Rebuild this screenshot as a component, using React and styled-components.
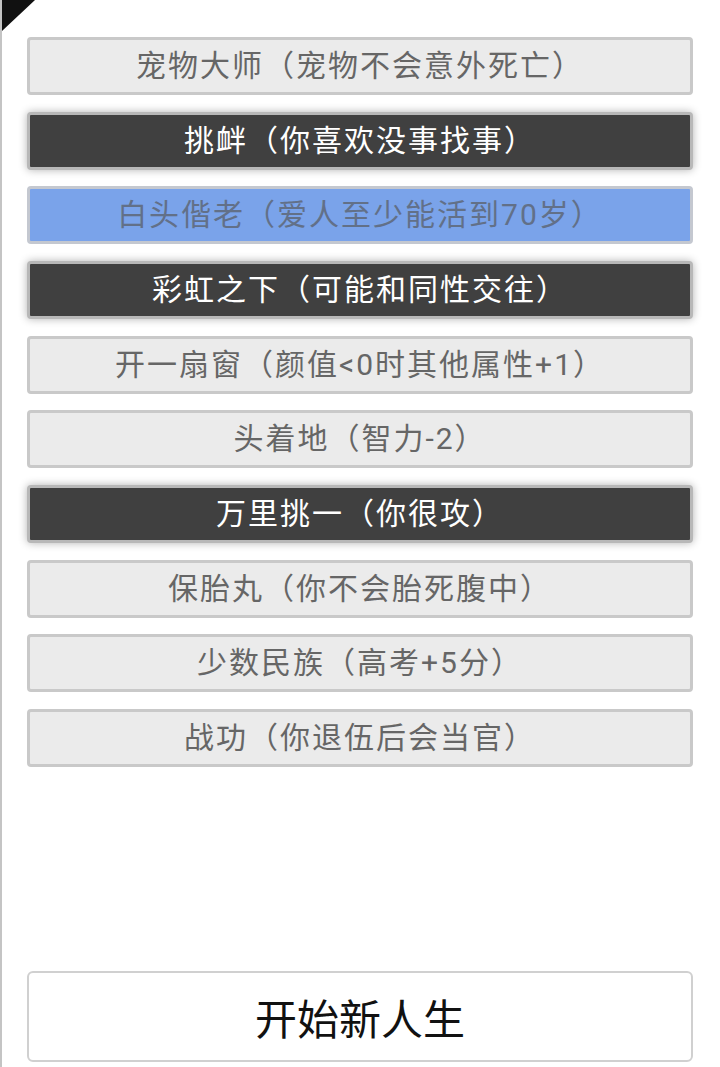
import React from "react";
import styled, { createGlobalStyle, css } from "styled-components";

const Global = createGlobalStyle`
  html, body { margin: 0; padding: 0; background: #fff; }
  body {
    font-family: Roboto, "Noto Sans CJK SC", "Noto Sans", sans-serif;
  }
  * { box-sizing: border-box; }
`;

const Page = styled.div`
  position: relative;
  height: 1067px;
  border-left: 2px solid #c4c4c4;
  display: flex;
  flex-direction: column;
  padding: 37px 27px 5px 25px;
  overflow: hidden;
`;

const Corner = styled.div`
  position: absolute;
  left: -2px;
  top: 0;
  width: 35px;
  height: 33px;
  background: #111;
  clip-path: polygon(0 0, 100% 0, 0 100%);
`;

const List = styled.div`
  display: flex;
  flex-direction: column;
  gap: 16.67px;
`;

const variants = {
  normal: css`
    background: #ebebeb;
    border-color: #c9c9c9;
    color: #666;
  `,
  dark: css`
    background: #404040;
    border-color: #b8b8b8;
    color: #fff;
    box-shadow: 0 0 9px rgba(0, 0, 0, 0.3);
  `,
  selected: css`
    background: #7aa3ea;
    border-color: #c4c8d0;
    color: #627088;
  `,
};

const Talent = styled.div`
  height: 58px;
  border: 3px solid;
  border-radius: 4px;
  display: flex;
  align-items: center;
  justify-content: center;
  font-size: 30px;
  letter-spacing: 2px;
  line-height: 1;
  white-space: nowrap;
  ${(p) => variants[p.$variant]}
`;

const StartButton = styled.div`
  margin-top: auto;
  height: 91px;
  border: 2px solid #d0d0d0;
  border-radius: 6px;
  background: #fff;
  color: #111;
  font-size: 42px;
  display: flex;
  align-items: center;
  justify-content: center;
`;

const items = [
  ["宠物大师（宠物不会意外死亡）", "normal"],
  ["挑衅（你喜欢没事找事）", "dark"],
  ["白头偕老（爱人至少能活到70岁）", "selected"],
  ["彩虹之下（可能和同性交往）", "dark"],
  ["开一扇窗（颜值<0时其他属性+1）", "normal"],
  ["头着地（智力-2）", "normal"],
  ["万里挑一（你很攻）", "dark"],
  ["保胎丸（你不会胎死腹中）", "normal"],
  ["少数民族（高考+5分）", "normal"],
  ["战功（你退伍后会当官）", "normal"],
];

export default function App() {
  return (
    <>
      <Global />
      <Page>
        <Corner />
        <List>
          {items.map(([t, v]) => (
            <Talent key={t} $variant={v}>
              {t}
            </Talent>
          ))}
        </List>
        <StartButton>开始新人生</StartButton>
      </Page>
    </>
  );
}
